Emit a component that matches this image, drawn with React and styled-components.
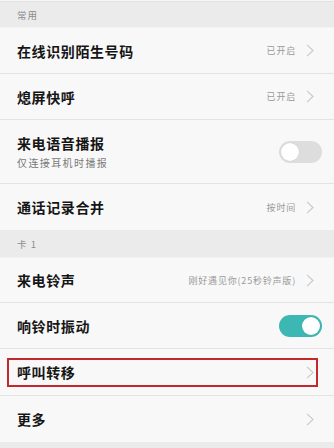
import React from "react";
import styled, { createGlobalStyle } from "styled-components";

const Global = createGlobalStyle`
  html, body { margin: 0; padding: 0; background: #f8f8f8; }
  body { width: 334px; height: 448px; overflow: hidden; font-family: "Noto Sans CJK SC", "Noto Sans", sans-serif; }
`;

const Page = styled.div`
  width: 334px;
  height: 448px;
  background: #ebebeb;
  display: flex;
  flex-direction: column;
  overflow: hidden;
`;

const TopStrip = styled.div`
  height: 1px;
  background: #f6f6f6;
  border-bottom: 1px solid #e2e2e2;
`;

const SectionHeader = styled.div`
  height: ${(p) => p.$h}px;
  flex: none;
  display: flex;
  align-items: center;
  padding-left: 17px;
  background: #ebebeb;
  color: #8c8c8c;
  font-size: 9.5px;
  letter-spacing: 1px;
  box-sizing: border-box;
  border-bottom: 1px solid #f3f3f3;
`;

const Row = styled.div`
  position: relative;
  height: ${(p) => p.$h}px;
  flex: none;
  box-sizing: border-box;
  display: flex;
  align-items: center;
  padding: 0 12px 0 17px;
  background: #f8f8f8;
  border-bottom: ${(p) => (p.$last ? "none" : "1px solid #e3e3e3")};
`;

const TextCol = styled.div`
  flex: 1;
  display: flex;
  flex-direction: column;
  gap: 4px;
`;

const Title = styled.div`
  font-size: 14px;
  font-weight: 700;
  color: #151515;
  letter-spacing: 0.6px;
  line-height: 18px;
`;

const Subtitle = styled.div`
  font-size: 10px;
  color: #7a7a7a;
  letter-spacing: 1.4px;
  line-height: 13px;
`;

const Value = styled.span`
  font-size: 9px;
  color: #9a9a9a;
  letter-spacing: 0.8px;
  margin-right: 10px;
`;

const ChevronBox = styled.span`
  display: flex;
  margin-right: 8px;
`;

const Chevron = () => (
  <ChevronBox>
    <svg width="8" height="13" viewBox="0 0 8 13">
      <polyline points="1,0.8 7,6.5 1,12.2" fill="none" stroke="#c9c9c9" strokeWidth="1.1" />
    </svg>
  </ChevronBox>
);

const Track = styled.div`
  width: 43px;
  height: 22px;
  border-radius: 11px;
  background: ${(p) => (p.$on ? "#3cb7b3" : "#dddddd")};
  position: relative;
  flex: none;
`;

const Knob = styled.div`
  position: absolute;
  top: 2px;
  left: ${(p) => (p.$on ? "23px" : "2px")};
  width: 18px;
  height: 18px;
  border-radius: 50%;
  background: #ffffff;
  box-shadow: 0 0 1px rgba(0, 0, 0, 0.15);
`;

const Toggle = ({ on }) => (
  <Track $on={on}>
    <Knob $on={on} />
  </Track>
);

const Highlight = styled.div`
  position: absolute;
  left: 7px;
  right: 16px;
  top: 9px;
  bottom: 8px;
  border: 2px solid #c4272c;
  pointer-events: none;
`;

const Item = ({ h, title, sub, value, toggle, chevron, highlight, last }) => (
  <Row $h={h} $last={last}>
    <TextCol>
      <Title>{title}</Title>
      {sub && <Subtitle>{sub}</Subtitle>}
    </TextCol>
    {value && <Value>{value}</Value>}
    {chevron && <Chevron />}
    {toggle !== undefined && <Toggle on={toggle} />}
    {highlight && <Highlight />}
  </Row>
);

export default function App() {
  return (
    <>
      <Global />
      <Page>
        <TopStrip />
        <SectionHeader $h={26}>常用</SectionHeader>
        <Item h={46} title="在线识别陌生号码" value="已开启" chevron />
        <Item h={46} title="熄屏快呼" value="已开启" chevron />
        <Item h={64} title="来电语音播报" sub="仅连接耳机时播报" toggle={false} />
        <Item h={46} title="通话记录合并" value="按时间" chevron last />
        <SectionHeader $h={28}>卡 1</SectionHeader>
        <Item h={45} title="来电铃声" value="刚好遇见你(25秒铃声版)" chevron />
        <Item h={46} title="响铃时振动" toggle={true} />
        <Item h={47} title="呼叫转移" chevron highlight />
        <Item h={46} title="更多" chevron last />
      </Page>
    </>
  );
}
